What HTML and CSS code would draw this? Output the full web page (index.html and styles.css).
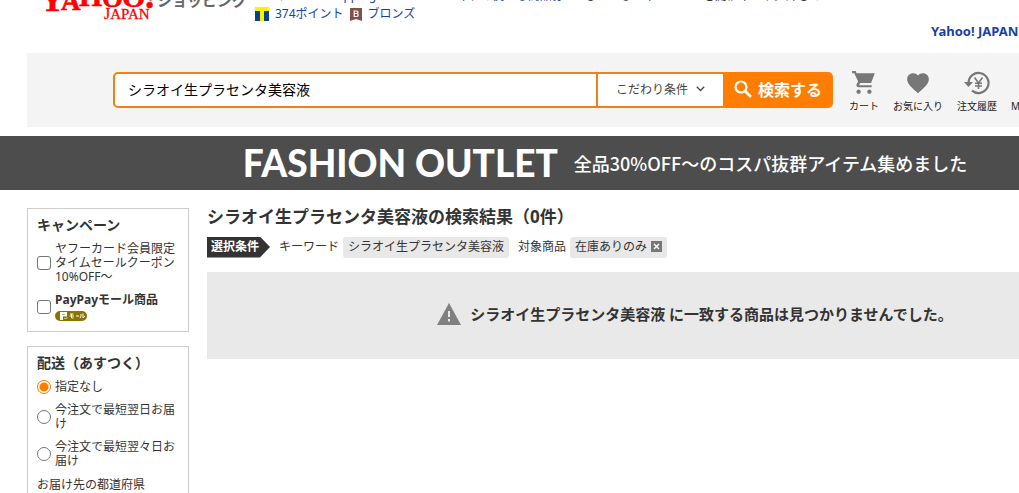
FILE: index.html
```html
<!DOCTYPE html>
<html lang="ja">
<head>
  <meta charset="UTF-8" />
  <meta name="viewport" content="width=device-width, initial-scale=1.0" />
  <title>シラオイ生プラセンタ美容液の検索結果 - Yahoo!ショッピング</title>
  <link rel="stylesheet" href="styles.css">
</head>
<body>
  <div class="page">
    <header class="masthead">
      <a class="logo" href="#" aria-label="Yahoo! JAPAN ショッピング">
        <svg width="207" height="62" viewBox="0 0 207 62">
          <g fill="#f00" stroke="#f00" stroke-width="0.6" font-family="'Liberation Serif', serif" font-weight="bold">
            <text x="0" y="51" font-size="34">Y</text>
            <text x="21" y="50" font-size="27">A</text>
            <text x="39" y="46" font-size="30">H</text>
            <text x="62" y="47" font-size="27">O</text>
            <text x="82" y="47" font-size="30">O</text>
            <text x="104" y="48" font-size="36" font-style="italic">!</text>
          </g>
          <text x="64" y="59" font-size="16" fill="#f00" stroke="#f00" stroke-width="0.3" font-family="'Liberation Serif', serif">J<tspan font-size="15">APAN</tspan></text>
          <text class="logo-service" x="117" y="46">ショッピング</text>
        </svg>
      </a>
      <div class="user">
        <p class="greeting">
          <span>こんにちは</span>
          <a class="user-id" href="#">shopping</a>
          <span>さん</span>
          <a class="promo" href="#">今すぐ使える商品券</a>
          <span>がもらえるキャンペーンを開催中です。詳しくはこちら</span>
        </p>
        <p class="points">
          <svg width="14" height="14" viewBox="0 0 14 14"><rect width="14" height="14" fill="#0b3f8f"/><path d="M0 0h14v4H9v10H5V4H0z" fill="#fff000"/></svg>
          <a href="#">374ポイント</a>
          <svg width="12" height="13" viewBox="0 0 12 13"><path d="M0 0h12v13l-6-2-6 2z" fill="#81504a"/><path d="M4.200 3h2.600q1.200 0 1.200 1.200T7 5.500q1.200.2 1.200 1.500T6.800 8.500H4.200zM4.500 5.500h2.500" fill="none" stroke="#fff" stroke-width="1.200"/></svg>
          <a href="#">ブロンズ</a>
        </p>
      </div>
      <nav class="site-links"><a href="#">Yahoo! JAPAN</a></nav>
    </header>

    <div class="search-bar">
      <form class="search">
        <input class="search-input" type="text" aria-label="キーワード" value="シラオイ生プラセンタ美容液">
        <button class="filter-button" type="button">こだわり条件
          <svg width="9" height="6" viewBox="0 0 9 6"><path d="M.8.8l3.700 3.700L8.200.8" fill="none" stroke="#444" stroke-width="1.300"/></svg>
        </button>
        <button class="submit-button" type="submit">
          <svg width="18" height="18" viewBox="0 0 18 18"><circle cx="7" cy="7" r="5.500" fill="none" stroke="#fff" stroke-width="2.200"/><path d="M11 11l6 6" stroke="#fff" stroke-width="2.600"/></svg>
          検索する
        </button>
      </form>
      <nav class="shortcuts">
        <a href="#">
          <svg width="26" height="26" viewBox="0 0 24 24"><path d="M7 18c-1.100 0-2 .9-2 2s.9 2 2 2 2-.9 2-2-.9-2-2-2zM1 1v2h2l3.600 7.600L5.200 13c-.7 1.300.3 3 1.800 3h12v-2H7.400l1.100-2h10l3.500-9H5.200L4.300 1zm16 17c-1.100 0-2 .9-2 2s.9 2 2 2 2-.9 2-2-.9-2-2-2z"/></svg>
          カート
        </a>
        <a href="#">
          <svg width="26" height="26" viewBox="0 0 24 24"><path d="M12 21.400l-1.500-1.300C5.400 15.400 2 12.300 2 8.500 2 5.400 4.400 3 7.500 3c1.700 0 3.400.8 4.500 2.100C13.100 3.800 14.800 3 16.500 3 19.600 3 22 5.400 22 8.500c0 3.800-3.400 6.900-8.500 11.600z"/></svg>
          お気に入り
        </a>
        <a href="#">
          <svg width="26" height="26" viewBox="0 0 26 26"><path d="M4.500 13A10 10 0 1 1 8 20.600" fill="none" stroke="#777" stroke-width="2.200"/><path d="M0 12h9l-4.500 5z"/><path d="M10.500 7.500l4 5.500 4-5.500M14.500 13v6M11 13.200h7M11 16h7" fill="none" stroke="#777" stroke-width="1.600"/></svg>
          注文履歴
        </a>
        <a href="#">
          <svg width="26" height="26" viewBox="0 0 24 24"><path d="M3 9h18v12H3zM4 3h16l2 5H2z"/></svg>
          Myストア
        </a>
      </nav>
    </div>

    <a class="banner" href="#">
      <span class="banner-title">FASHION OUTLET</span>
      <span class="banner-text">全品30%OFF〜のコスパ抜群アイテム集めました</span>
    </a>

    <div class="content">
      <aside class="sidebar">
        <section class="filter-box">
          <h2>キャンペーン</h2>
          <label class="option">
            <input type="checkbox">
            <span>ヤフーカード会員限定タイムセールクーポン10%OFF〜</span>
          </label>
          <label class="option">
            <input type="checkbox">
            <span><b>PayPayモール商品</b>
              <svg width="32" height="10" viewBox="0 0 32 10"><rect width="32" height="10" rx="5" fill="#8c7300"/><path d="M5 1h7v4.500H8V9H5z" fill="#fff"/><path d="M7 3.500h3M9 7.500h3V6" fill="none" stroke="#c9bd82"/><path d="M15 3h3.500M14.500 5h4.500M16.500 3v4h2M21 5h3M26 3v2l-1 2M28 2.500V7l2-2" fill="none" stroke="#fff"/></svg>
            </span>
          </label>
        </section>
        <section class="filter-box">
          <h2>配送（あすつく）</h2>
          <label class="option">
            <input type="radio" name="delivery" checked>
            <span>指定なし</span>
          </label>
          <label class="option">
            <input type="radio" name="delivery">
            <span>今注文で最短翌日お届け</span>
          </label>
          <label class="option">
            <input type="radio" name="delivery">
            <span>今注文で最短翌々日お届け</span>
          </label>
          <p class="prefecture">お届け先の都道府県</p>
        </section>
      </aside>
      <main class="results">
        <h1>シラオイ生プラセンタ美容液の検索結果（0件）</h1>
        <div class="conditions">
          <strong class="conditions-label">選択条件</strong>
          <span class="condition">キーワード <span class="chip">シラオイ生プラセンタ美容液</span></span>
          <span class="condition">対象商品
            <span class="chip">在庫ありのみ
              <button class="chip-remove" type="button" aria-label="解除">
                <svg width="11" height="11" viewBox="0 0 11 11"><rect width="11" height="11" fill="#777"/><path d="M3 3l5 5M8 3l-5 5" stroke="#fff" stroke-width="1.400"/></svg>
              </button>
            </span>
          </span>
        </div>
        <div class="empty">
          <svg width="24" height="22" viewBox="0 0 24 22"><path d="M12 0l12 22H0z" fill="#808080"/><path d="M12 8v6M12 16v2.500" stroke="#e9e9e9" stroke-width="2"/></svg>
          <p>シラオイ生プラセンタ美容液 に一致する商品は見つかりませんでした。</p>
        </div>
      </main>
    </div>
  </div>
</body>
</html>
```
FILE: styles.css
```css
* { margin: 0; padding: 0; box-sizing: border-box; }
body {
  font-family: "Noto Sans", "Noto Sans CJK JP", sans-serif;
  font-size: 12px;
  line-height: 14px;
  color: #333;
  background: #fff;
  height: 100vh;
  overflow: hidden;
}
a {
  color: #1a3fa8;
  text-decoration: none;
}
button, input {
  font-family: inherit;
}
svg {
  flex-shrink: 0;
}
.page {
  min-width: 1210px;
}

/* header */
.masthead {
  display: flex;
  height: 53px;
  padding-left: 40px;
  overflow: hidden;
}
.logo {
  margin-top: -40px;
}
.logo-service {
  font-family: "Noto Sans CJK JP", sans-serif;
  font-size: 15px;
  font-weight: bold;
  fill: #666;
}
.user {
  margin-left: 8px;
  margin-top: -11px;
  width: 676px;
  white-space: nowrap;
}
.greeting {
  display: flex;
  gap: 8px;
  height: 17px;
}
.promo {
  margin-left: 40px;
}
.points {
  display: flex;
  align-items: center;
  gap: 6px;
  height: 16px;
}
.site-links {
  margin-top: 24px;
  font-size: 13px;
  font-weight: bold;
}

/* search */
.search-bar {
  display: flex;
  margin: 0 27px 9px;
  padding: 19px 0 19px 86px;
  background: #f4f4f4;
}
.search {
  display: flex;
  width: 720px;
  height: 36px;
}
.search-input {
  flex: 1;
  min-width: 0;
  padding: 0 13px 3px;
  border: 2px solid #f08018;
  border-radius: 5px 0 0 5px;
  background: #fff;
  color: #000;
  font-size: 14px;
  outline: none;
}
.filter-button {
  display: flex;
  align-items: center;
  justify-content: center;
  gap: 8px;
  width: 125px;
  padding-bottom: 2px;
  border: 2px solid #f08018;
  border-width: 2px 0;
  background: #fff;
  color: #444;
  font-size: 12px;
  cursor: pointer;
}
.submit-button {
  display: flex;
  align-items: center;
  justify-content: center;
  gap: 6px;
  width: 110px;
  padding-bottom: 2px;
  border: none;
  border-radius: 0 5px 5px 0;
  background: #ff7d00;
  color: #fff;
  font-size: 16px;
  font-weight: bold;
  cursor: pointer;
}
.shortcuts {
  display: flex;
  gap: 14px;
  margin: -2px 0 0 16px;
  white-space: nowrap;
}
.shortcuts a {
  display: flex;
  flex-direction: column;
  align-items: center;
  gap: 3px;
  height: 38px;
  color: #222;
  font-size: 10px;
}
.shortcuts svg {
  fill: #777;
}

/* banner */
.banner {
  display: flex;
  align-items: center;
  justify-content: center;
  gap: 16px;
  height: 54px;
  background: #4d4d4d;
  color: #fff;
  white-space: nowrap;
}
.banner-title {
  font-family: Lato, sans-serif;
  font-size: 37px;
  font-weight: 900;
}
.banner-text {
  font-family: "Noto Sans CJK JP", sans-serif;
  font-size: 18px;
  font-weight: 500;
}

/* sidebar */
.content {
  display: flex;
  gap: 18px;
  padding: 18px 27px 0;
}
.sidebar {
  width: 162px;
  flex-shrink: 0;
}
.filter-box {
  margin-bottom: 14px;
  padding: 8px 9px 10px;
  border: 1px solid #ccc;
}
.filter-box h2 {
  margin-bottom: 9px;
  font-size: 14px;
  line-height: 16px;
}
.option {
  display: flex;
  align-items: center;
  gap: 4px;
  margin-bottom: 9px;
}
.option:last-child {
  margin-bottom: 0;
}
.option span {
  flex: 1;
  word-break: break-all;
}
.option svg {
  display: block;
  margin-top: 4px;
}
.option input {
  appearance: none;
  width: 14px;
  height: 14px;
  flex-shrink: 0;
  border: 1px solid #767676;
  border-radius: 3px;
  background: #fff;
}
.option input[type="radio"] {
  border-radius: 50%;
}
.option input[type="radio"]:checked {
  border-color: #f57c00;
  background: radial-gradient(circle, #ff7d00 4px, #fff 5px);
}
.prefecture {
  padding-top: 1px;
}

/* results */
.results {
  flex: 1;
  min-width: 0;
}
.results h1 {
  font-size: 17px;
  line-height: 18px;
}
.conditions {
  display: flex;
  align-items: center;
  height: 22px;
  margin: 10px 0 14px;
}
.conditions-label {
  width: 63px;
  padding: 3px 4px 4px;
  background: #333;
  color: #fff;
  clip-path: polygon(0 0, 84% 0, 100% 50%, 84% 100%, 0 100%);
}
.condition {
  display: flex;
  align-items: center;
  gap: 4px;
  margin-left: 9px;
}
.chip {
  display: flex;
  align-items: center;
  gap: 4px;
  padding: 3px 5px 4px;
  border-radius: 3px;
  background: #e8e8e8;
}
.chip-remove {
  display: flex;
  border: none;
  background: none;
  cursor: pointer;
}
.empty {
  display: flex;
  justify-content: center;
  gap: 9px;
  padding: 31px 0 33px;
  background: #e9e9e9;
  font-size: 15px;
  font-weight: bold;
  line-height: 23px;
}
```
